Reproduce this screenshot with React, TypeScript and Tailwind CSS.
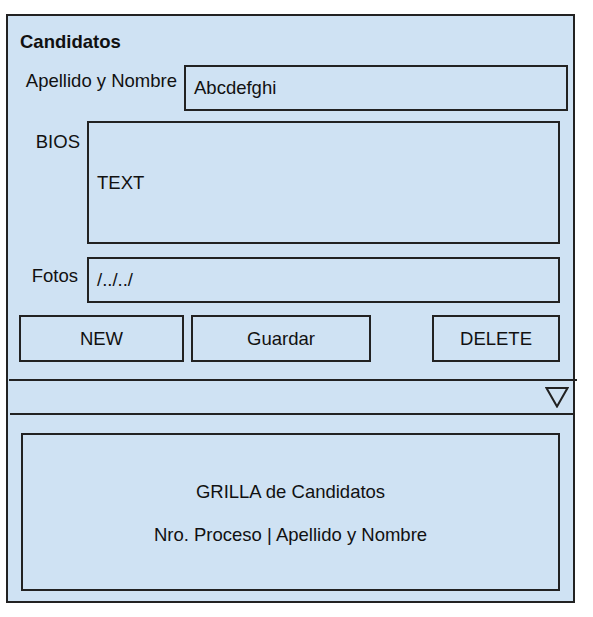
export default function App() {
  return (
    <div className="w-[593px] h-[617px] bg-white text-[#111] font-['Liberation_Sans',Arial,sans-serif] text-[18.5px] leading-[22px] pt-[14px] pl-[6px]">
      {/* Candidatos form frame */}
      <div className="w-[569px] h-[589px] border-2 border-[#222] bg-[#cfe2f3] flex flex-col">
        <div className="mt-[15px] pl-[12px] font-bold">Candidatos</div>

        {/* Apellido y Nombre */}
        <div className="mt-[12px] flex items-start">
          <div className="w-[176px] pr-[7px] text-right mt-[5px]">Apellido y Nombre</div>
          <div className="w-[384px] h-[46px] border-2 border-[#222] flex items-center pl-[8px]">Abcdefghi</div>
        </div>

        {/* BIOS */}
        <div className="mt-[10px] flex items-start">
          <div className="w-[79px] pr-[7px] text-right mt-[10px]">BIOS</div>
          <div className="w-[473px] h-[123px] border-2 border-[#222] flex items-center pl-[8px]">TEXT</div>
        </div>

        {/* Fotos */}
        <div className="mt-[13px] flex items-start">
          <div className="w-[79px] pr-[9px] text-right mt-[8px]">Fotos</div>
          <div className="w-[473px] h-[46px] border-2 border-[#222] flex items-center pl-[8px]">/../../</div>
        </div>

        {/* Actions */}
        <div className="mt-[12px] flex pl-[11px]">
          <div className="w-[165px] h-[47px] border-2 border-[#222] flex items-center justify-center">NEW</div>
          <div className="ml-[7px] w-[180px] h-[47px] border-2 border-[#222] flex items-center justify-center">Guardar</div>
          <div className="ml-[61px] w-[128px] h-[47px] border-2 border-[#222] flex items-center justify-center">DELETE</div>
        </div>

        {/* Collapsible divider */}
        <div className="mt-[17px] ml-[1px] w-[568px] h-[2px] bg-[#222]" />
        <div className="h-[32px] flex justify-end items-start pt-[6px] pr-[4px]">
          <svg width="24" height="21" viewBox="0 0 24 21">
            <polygon points="1.5,1 22.5,1 12,19.5" fill="none" stroke="#222" strokeWidth="2" strokeLinejoin="miter" />
          </svg>
        </div>
        <div className="ml-[2px] w-[563px] h-[2px] bg-[#222]" />

        {/* Grid */}
        <div className="mt-[18px] ml-[13px] w-[539px] h-[158px] border-2 border-[#222] flex flex-col items-center justify-center gap-[21px] pt-[3px]">
          <div>GRILLA de Candidatos</div>
          <div>Nro. Proceso | Apellido y Nombre</div>
        </div>
      </div>
    </div>
  );
}
